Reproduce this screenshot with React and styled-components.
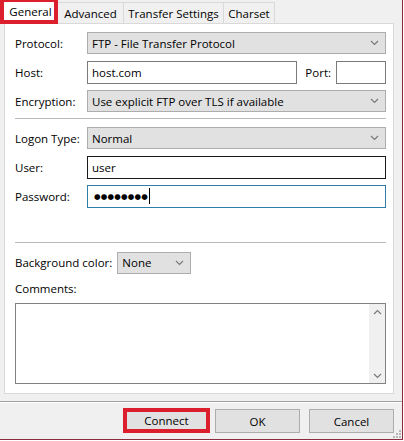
import styled, { createGlobalStyle } from 'styled-components';

const GlobalStyle = createGlobalStyle`
  html, body {
    margin: 0;
    padding: 0;
    background: #ffffff;
  }

  body {
    font-family: 'Open Sans', 'Noto Sans', sans-serif;
    font-size: 11.5px;
    color: #000000;
  }
`;

const Chevron = ({ up = false }) => (
  <svg width="9" height="6" viewBox="0 0 9 6">
    <polyline
      points={up ? '1,5 4.5,1.5 8,5' : '1,1 4.5,4.5 8,1'}
      fill="none"
      stroke="#7a7a7a"
      strokeWidth="1.2"
    />
  </svg>
);

const Grip = () => (
  <svg width="8" height="8" viewBox="0 0 8 8">
    {[[6, 0], [6, 3], [3, 3], [6, 6], [3, 6], [0, 6]].map(([x, y]) => (
      <rect key={`${x}-${y}`} x={x} y={y} width="2" height="2" fill="#b8b8b8" />
    ))}
  </svg>
);

const App = () => {
  return (
    <>
      <GlobalStyle />
      <Window>
        <TabBar>
          <ActiveTab>General</ActiveTab>
          <Tab $w={66}>Advanced</Tab>
          <Tab $w={100}>Transfer Settings</Tab>
          <Tab $w={51}>Charset</Tab>
        </TabBar>

        <Panel>
          <FormGrid>
            <Label>Protocol:</Label>
            <ComboBox>
              <span>FTP - File Transfer Protocol</span>
              <Chevron />
            </ComboBox>

            <Label>Host:</Label>
            <HostRow>
              <Field readOnly value="host.com" />
              <PortLabel>Port:</PortLabel>
              <Field readOnly value="" $w={50} />
            </HostRow>

            <Label>Encryption:</Label>
            <ComboBox>
              <span>Use explicit FTP over TLS if available</span>
              <Chevron />
            </ComboBox>
          </FormGrid>

          <Separator />

          <FormGrid>
            <Label>Logon Type:</Label>
            <ComboBox>
              <span>Normal</span>
              <Chevron />
            </ComboBox>

            <Label>User:</Label>
            <Field readOnly value="user" $border="#1a1a1a" />

            <Label>Password:</Label>
            <PasswordBox>
              <Dots>●●●●●●●●</Dots>
              <Caret />
            </PasswordBox>
          </FormGrid>

          <Separator $gap={35} />

          <ColorRow>
            <Label>Background color:</Label>
            <ComboBox $w={74}>
              <span>None</span>
              <Chevron />
            </ComboBox>
          </ColorRow>

          <CommentsLabel>Comments:</CommentsLabel>
          <CommentsBox>
            <CommentsArea />
            <ScrollTrack>
              <Chevron up />
              <Chevron />
            </ScrollTrack>
          </CommentsBox>
        </Panel>

        <Footer>
          <ConnectButton>Connect</ConnectButton>
          <Button>OK</Button>
          <Button>Cancel</Button>
        </Footer>

        <GripCorner>
          <Grip />
        </GripCorner>
      </Window>
    </>
  );
};

export default App;

const Window = styled.div`
  position: relative;
  display: flex;
  flex-direction: column;

  width: 403px;
  height: 440px;
  box-sizing: border-box;

  background: #f0f0f0;
  border-right: 1px solid #8e2b3c;
  border-bottom: 1px solid #8e2b3c;
`;

const TabBar = styled.div`
  display: flex;
  align-items: flex-end;

  height: 24px;
  margin-bottom: -1px;
`;

const Tab = styled.div`
  display: flex;
  align-items: center;
  justify-content: center;

  width: ${({ $w }) => $w}px;
  height: 21px;
  box-sizing: border-box;
  margin-bottom: 1px;

  border: 1px solid #d9d9d9;
  border-left: none;
  border-bottom: none;
  background: #f0f0f0;

  white-space: nowrap;
`;

const ActiveTab = styled.div`
  position: relative;
  z-index: 1;

  display: flex;
  align-items: center;
  justify-content: center;

  width: 58px;
  height: 26px;
  box-sizing: border-box;
  padding: 1px 0 0 3px;

  border: 4px solid #dc1f2d;
  background: #ffffff;
`;

const Panel = styled.div`
  display: flex;
  flex-direction: column;

  margin: 0 8px 0 4px;
  padding: 8px 7px 9px 10px;

  background: #ffffff;
  border: 1px solid #d9d9d9;
`;

const FormGrid = styled.div`
  display: grid;
  grid-template-columns: 72px 1fr;
  grid-auto-rows: 22px;
  row-gap: 7px;
  align-items: center;
`;

const Label = styled.div`
  white-space: nowrap;
`;

const ComboBox = styled.div`
  display: flex;
  align-items: center;
  justify-content: space-between;

  ${({ $w }) => ($w ? `width: ${$w}px;` : '')}
  height: 22px;
  box-sizing: border-box;
  padding: 0 6px 0 4px;

  background: #e1e1e1;
  border: 1px solid #adadad;

  white-space: nowrap;
`;

const HostRow = styled.div`
  display: flex;
  align-items: center;
  height: 23px;
`;

const PortLabel = styled.span`
  margin: 0 5px 0 8px;
`;

const Field = styled.input`
  ${({ $w }) => ($w ? `width: ${$w}px;` : 'flex: 1; min-width: 0;')}
  height: 23px;
  box-sizing: border-box;
  padding: 0 4px;

  font: inherit;
  color: #000000;

  background: #ffffff;
  border: 1px solid ${({ $border }) => $border || '#7a7a7a'};
  outline: none;
`;

const PasswordBox = styled.div`
  display: flex;
  align-items: center;

  height: 23px;
  box-sizing: border-box;
  padding: 0 4px 0 6px;

  background: #ffffff;
  border: 1px solid #2f7ea3;
`;

const Dots = styled.span`
  font-family: 'DejaVu Sans', sans-serif;
  font-size: 7.5px;
  letter-spacing: 0.2px;
`;

const Caret = styled.span`
  display: inline-block;
  width: 1px;
  height: 16px;
  margin-left: 1px;
  background: #000000;
`;

const Separator = styled.div`
  margin: ${({ $gap }) => $gap || 6}px 0 7px;
  border-top: 1px solid #b9b9b9;
  border-bottom: 1px solid #ffffff;
`;

const ColorRow = styled.div`
  display: flex;
  align-items: center;
  gap: 5px;

  height: 23px;
`;

const CommentsLabel = styled.div`
  margin-top: 7px;
  line-height: 16px;
`;

const CommentsBox = styled.div`
  display: flex;

  height: 81px;
  margin-top: 6px;
  box-sizing: border-box;

  background: #ffffff;
  border: 1px solid #828282;
`;

const CommentsArea = styled.div`
  flex: 1;
`;

const ScrollTrack = styled.div`
  display: flex;
  flex-direction: column;
  justify-content: space-between;
  align-items: center;

  width: 16px;
  padding: 5px 0 4px;

  background: #f0f0f0;
`;

const Footer = styled.div`
  display: flex;
  justify-content: flex-end;
  align-items: flex-start;
  gap: 9px;

  margin-top: 7px;
  padding: 7px 8px 0 0;

  border-top: 1px solid #a0a0a0;
  box-shadow: inset 0 1px 0 #ffffff;

  flex: 1;
`;

const Button = styled.button`
  width: 85px;
  height: 24px;
  box-sizing: border-box;
  padding: 0;

  font: inherit;
  color: #000000;

  background: #e1e1e1;
  border: 1px solid #adadad;
`;

const ConnectButton = styled(Button)`
  width: 87px;
  height: 25px;
  margin: -1px -4px 0 0;

  border: 4px solid #dc1f2d;
`;

const GripCorner = styled.div`
  position: absolute;
  right: 1px;
  bottom: 1px;

  display: flex;
`;
